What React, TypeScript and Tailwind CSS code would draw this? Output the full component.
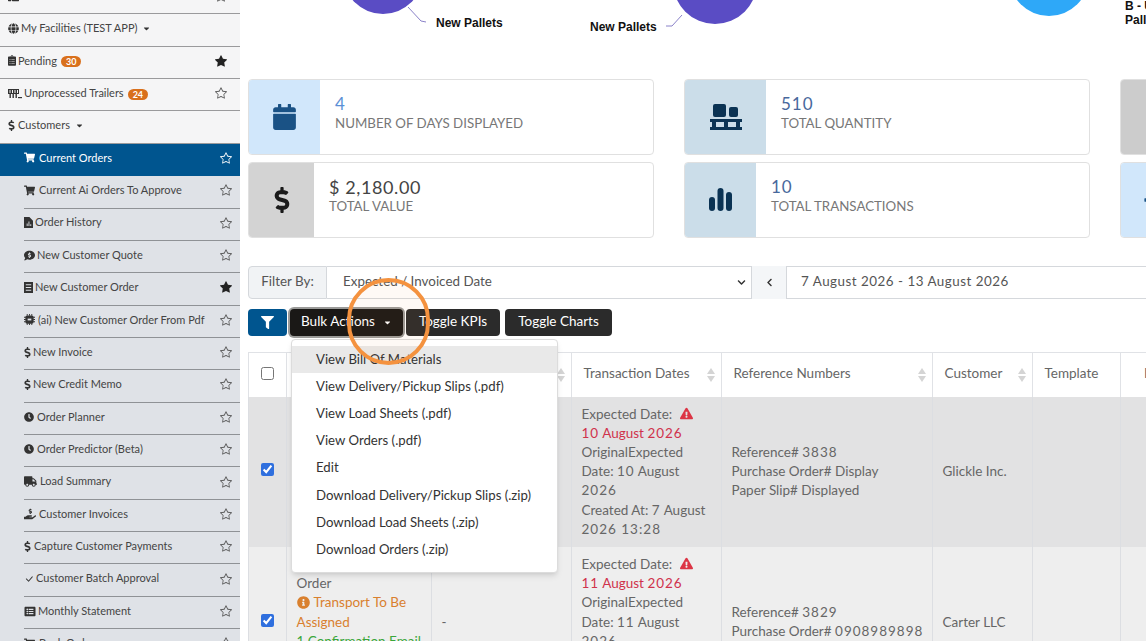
import React from "react";
import { FaGlobe, FaClipboardList, FaShoppingCart, FaCommentDollar, FaClock, FaTruck, FaHandHoldingUsd, FaDollarSign, FaListAlt, FaThList, FaCalendar, FaFilter, FaChevronLeft, FaChevronDown, FaExclamationTriangle, FaInfoCircle, FaCaretDown, FaLongArrowAltRight, FaFileInvoice } from "react-icons/fa";
import { BsStar, BsStarFill, BsCheckLg } from "react-icons/bs";

const font = "font-['Lato','Liberation_Sans',sans-serif]";

function Star({ on, light }: { on?: boolean; light?: boolean }) {
  return on ? <BsStarFill className={`w-[12px] h-[12px] ${light ? "text-white" : "text-[#222]"}`} /> : <BsStar className={`w-[12px] h-[12px] ${light ? "text-white" : "text-[#555]"}`} />;
}

function Badge({ n }: { n: string }) {
  return <span className="ml-1 rounded-full bg-[#d9701c] text-white text-[9px] font-bold px-[5px] leading-[11px] translate-y-[1px]">{n}</span>;
}

function TrailerIcon() {
  return (
    <svg viewBox="0 0 14 11" className="w-[14px] h-[11px] shrink-0" fill="#333">
      <path d="M0 1h11v5H0z M1.5 2v3h1V2z M4 2v3h1V2z M6.5 2v3h1V2z M9 2v3h1V2z" fillRule="evenodd" />
      <rect x="1.5" y="6" width="1.4" height="4" />
      <rect x="4.5" y="6" width="1.4" height="4" />
      <rect x="7.5" y="6" width="1.4" height="4" />
      <rect x="10" y="9" width="4" height="1.2" />
    </svg>
  );
}

function DocIcon() {
  return (
    <svg viewBox="0 0 10 12" className="w-[9px] h-[11px]" fill="#333">
      <path d="M0 0h6l4 4v8H0z M3 7v3h1V7z M5 5v5h1V5z M7 8v2h1V8z" fillRule="evenodd" />
    </svg>
  );
}

function ListDocIcon() {
  return (
    <svg viewBox="0 0 10 12" className="w-[9px] h-[11px]" fill="#333">
      <path d="M0 0h10v12H0z M2 2.5v1h6v-1z M2 5.5v1h6v-1z M2 8.5v1h6v-1z" fillRule="evenodd" />
    </svg>
  );
}

function AiIcon() {
  return (
    <svg viewBox="0 0 12 12" className="w-[11px] h-[11px]" fill="#333">
      <rect x="1.5" y="1.5" width="9" height="9" rx="2" />
      <path d="M3 0h1v2H3z M5.5 0h1v2h-1z M8 0h1v2H8z M3 10h1v2H3z M5.5 10h1v2h-1z M8 10h1v2H8z M0 3h2v1H0z M0 5.5h2v1H0z M0 8h2v1H0z M10 3h2v1h-2z M10 5.5h2v1h-2z M10 8h2v1h-2z" />
      <rect x="4" y="5" width="4" height="2" fill="#dfe2e7" />
    </svg>
  );
}

function TopRow({ icon, w, label, badge, star, caret }: { icon: React.ReactNode; w: string; label: string; badge?: string; star?: boolean; caret?: boolean }) {
  return (
    <div className="h-[32.37px] shrink-0 flex items-center pb-[3px] pl-2 pr-[13px] border-b border-[#9a9a9c] text-[11px] text-[#444]">
      <span className={`${w} shrink-0 flex items-center text-[#333]`}>{icon}</span>
      <span className="whitespace-nowrap">{label}</span>
      {badge && <Badge n={badge} />}
      {caret && <FaCaretDown className="ml-[5px] w-[9px] h-[9px] text-[#333]" />}
      {star !== undefined && <span className="ml-auto flex"><Star on={star} /></span>}
    </div>
  );
}

function SubRow({ icon, w, label, on, active }: { icon: React.ReactNode; w: string; label: string; on?: boolean; active?: boolean }) {
  return (
    <div className={`h-[32.37px] shrink-0 ${active ? "bg-[#00558f]" : "pl-6"}`}>
      <div className={`h-full flex items-center pb-[3px] pr-2 border-b ${active ? "pl-6 border-transparent text-white" : "border-[#8f9296] text-[#444]"} text-[11px]`}>
        <span className={`${w} shrink-0 flex items-center ${active ? "text-white" : "text-[#333]"}`}>{icon}</span>
        <span className="whitespace-nowrap">{label}</span>
        <span className="ml-auto flex"><Star on={on} light={active} /></span>
      </div>
    </div>
  );
}

const ic = "w-[11px] h-[11px]";
const dl = "w-[7px] h-[11px]";

function Sidebar() {
  return (
    <aside className="w-[240px] shrink-0 h-[641px] overflow-hidden flex flex-col bg-[#dfe2e7]">
      <div className="bg-[#f5f5f6] -mt-[18px]">
        <TopRow w="w-[14px]" icon={<FaThList className={ic} />} label="Pallet Trends" star={false} />
        <TopRow w="w-[13px]" icon={<FaGlobe className={ic} />} label="My Facilities (TEST APP)" caret />
        <TopRow w="w-[10px]" icon={<FaClipboardList className="w-[8px] h-[11px]" />} label="Pending" badge="30" star={true} />
        <TopRow w="w-[16px]" icon={<TrailerIcon />} label="Unprocessed Trailers" badge="24" star={false} />
        <TopRow w="w-[10px]" icon={<FaDollarSign className={dl} />} label="Customers" caret />
      </div>
      <SubRow active w="w-[15px]" icon={<FaShoppingCart className={ic} />} label="Current Orders" />
      <SubRow w="w-[15px]" icon={<FaShoppingCart className={ic} />} label="Current Ai Orders To Approve" />
      <SubRow w="w-[11px]" icon={<DocIcon />} label="Order History" />
      <SubRow w="w-[13px]" icon={<FaCommentDollar className={ic} />} label="New Customer Quote" />
      <SubRow on w="w-[11px]" icon={<ListDocIcon />} label="New Customer Order" />
      <SubRow w="w-[14px]" icon={<AiIcon />} label="(ai) New Customer Order From Pdf" />
      <SubRow w="w-[9px]" icon={<FaDollarSign className={dl} />} label="New Invoice" />
      <SubRow w="w-[9px]" icon={<FaDollarSign className={dl} />} label="New Credit Memo" />
      <SubRow w="w-[13px]" icon={<FaClock className="w-[10px] h-[10px]" />} label="Order Planner" />
      <SubRow w="w-[13px]" icon={<FaClock className="w-[10px] h-[10px]" />} label="Order Predictor (Beta)" />
      <SubRow w="w-[16px]" icon={<FaTruck className="w-[13px] h-[11px]" />} label="Load Summary" />
      <SubRow w="w-[15px]" icon={<FaHandHoldingUsd className="w-[12px] h-[12px]" />} label="Customer Invoices" />
      <SubRow w="w-[10px]" icon={<FaDollarSign className={dl} />} label="Capture Customer Payments" />
      <SubRow w="w-[12px]" icon={<BsCheckLg className="w-[10px] h-[10px]" />} label="Customer Batch Approval" />
      <SubRow w="w-[14px]" icon={<FaListAlt className="w-[12px] h-[11px]" />} label="Monthly Statement" />
      <SubRow w="w-[15px]" icon={<FaShoppingCart className={ic} />} label="Bank Orders" />
    </aside>
  );
}

function Charts() {
  return (
    <div className="h-[79px] shrink-0">
      <svg width="906" height="79" viewBox="240 0 906 79" className="block -ml-2 w-[906px]">
        <circle cx="383" cy="-26" r="40" fill="#5a4cc4" />
        <path d="M408 7 L421 21 L426 22" fill="none" stroke="#8a82c9" />
        <text x="436" y="27" fontSize="12" fontWeight="700" fill="#111" fontFamily="Liberation Sans">New Pallets</text>
        <circle cx="715" cy="-18" r="42" fill="#5a4cc4" />
        <path d="M682 15 L672 26 L666 26" fill="none" stroke="#8a82c9" />
        <text x="590" y="31" fontSize="12" fontWeight="700" fill="#111" fontFamily="Liberation Sans">New Pallets</text>
        <circle cx="1049" cy="-24" r="40" fill="#2ea8f8" />
        <text x="1125" y="10" fontSize="12" fontWeight="700" fill="#111" fontFamily="Liberation Sans">B - Used</text>
        <text x="1125" y="24" fontSize="12" fontWeight="700" fill="#111" fontFamily="Liberation Sans">Pallets</text>
      </svg>
    </div>
  );
}

function PalletIcon() {
  return (
    <svg viewBox="0 0 32 26" className="w-[32px] h-[26px]" fill="#0b3354">
      <rect x="3" y="0" width="13" height="13" rx="2" />
      <rect x="19" y="3" width="9" height="10" rx="2" />
      <rect x="0" y="15" width="32" height="3" />
      <rect x="0" y="23" width="32" height="3" />
      <rect x="2" y="18" width="4" height="5" />
      <rect x="14" y="18" width="4" height="5" />
      <rect x="26" y="18" width="4" height="5" />
    </svg>
  );
}

function BarsIcon() {
  return (
    <svg viewBox="0 0 23 23" className="w-[23px] h-[23px]" fill="#0b3354">
      <rect x="0" y="9" width="6" height="14" rx="3" />
      <rect x="8.5" y="0" width="6" height="23" rx="3" />
      <rect x="17" y="4" width="6" height="19" rx="3" />
    </svg>
  );
}

function Kpi({ w, bg, icon, value, label, vc, big }: { w: string; bg: string; icon: React.ReactNode; value: string; label: string; vc: string; big?: boolean }) {
  return (
    <div className="w-[406px] h-[75.5px] shrink-0 flex rounded border border-[#e0e0e0] bg-white overflow-hidden">
      <div className={`${w} ${bg} flex items-center justify-center shrink-0`}>{icon}</div>
      <div className="pl-[15px] pb-2 flex flex-col justify-center">
        <div className={`${vc} ${big ? "text-[18px] tracking-[0.6px]" : "text-[17px] tracking-[1px]"} leading-[20px]`}>{value}</div>
        <div className="text-[#777] text-[13.3px] leading-[18px]">{label}</div>
      </div>
    </div>
  );
}

function Kpis() {
  return (
    <div className="flex flex-col gap-[7.5px] shrink-0">
      <div className="flex gap-[30px]">
        <Kpi w="w-[71px]" bg="bg-[#d1e7fb]" icon={<FaCalendar className="w-[23px] h-[26px] text-[#1a5285]" />} value="4" label="NUMBER OF DAYS DISPLAYED" vc="text-[#5b8fd6]" />
        <Kpi w="w-[81px]" bg="bg-[#cbdde9]" icon={<PalletIcon />} value="510" label="TOTAL QUANTITY" vc="text-[#48689c]" />
        <Kpi w="w-[66px]" bg="bg-[#cccccc]" icon={<FaFileInvoice className="w-[17px] h-[22px] text-[#222]" />} value="" label="" vc="" />
      </div>
      <div className="flex gap-[30px]">
        <Kpi w="w-[65px]" bg="bg-[#d3d3d3]" icon={<FaDollarSign className="w-[24px] h-[26px] text-[#1a1a1a]" />} value="$ 2,180.00" label="TOTAL VALUE" vc="text-[#444]" big />
        <Kpi w="w-[71px]" bg="bg-[#cbdde9]" icon={<BarsIcon />} value="10" label="TOTAL TRANSACTIONS" vc="text-[#48689c]" />
        <Kpi w="w-[66px]" bg="bg-[#d1e7fb]" icon={<FaLongArrowAltRight className="w-[22px] h-[22px] text-[#1a5285]" />} value="" label="" vc="" />
      </div>
    </div>
  );
}

function FilterRow() {
  return (
    <div className="mt-[28.5px] h-[33px] shrink-0 flex text-[13.4px] text-[#555] w-[1000px]">
      <div className="w-[79px] pb-[2px] flex items-center justify-center bg-[#f1f3f5] border border-[#d5d8dc] rounded-l">Filter By:</div>
      <div className="w-[425px] pb-[2px] flex items-center justify-between pl-4 pr-[5px] border-y border-r border-[#d5d8dc]">
        <span>Expected / Invoiced Date</span>
        <FaChevronDown className="w-[9px] h-[9px] text-[#333] translate-y-[1px]" />
      </div>
      <div className="w-[34px] flex items-center justify-center bg-[#f4f6f8]"><FaChevronLeft className="w-[9px] h-[9px] text-[#333]" /></div>
      <div className="flex-1 pb-[2px] flex items-center pl-[14px] border border-[#d5d8dc] tracking-[0.5px]">7 August 2026 - 13 August 2026</div>
    </div>
  );
}

const menuItems = ["View Bill Of Materials", "View Delivery/Pickup Slips (.pdf)", "View Load Sheets (.pdf)", "View Orders (.pdf)", "Edit", "Download Delivery/Pickup Slips (.zip)", "Download Load Sheets (.zip)", "Download Orders (.zip)"];

function Buttons() {
  return (
    <div className="mt-[10px] h-[27px] shrink-0 flex text-white text-[13.5px] relative z-10">
      <button className="w-[39px] rounded bg-[#00558f] flex items-center justify-center"><FaFilter className="w-[13px] h-[13px]" /></button>
      <div className="relative ml-[3px]">
        <button className="w-[113px] h-[27px] pb-[2px] rounded bg-[#1a1816] ring-2 ring-[#9a9a98] flex items-center justify-center gap-2">Bulk Actions <FaCaretDown className="w-[9px] h-[9px] translate-y-[1px]" /></button>
        <div className="absolute left-[1px] top-[30px] w-[267px] h-[234px] bg-white rounded border border-[#dcdcdc] shadow-md pt-[6px] text-[#333] text-[13.2px]">
          {menuItems.map((m, i) => (
            <div key={m} className={`h-[27.2px] flex items-center pl-6 whitespace-nowrap ${i === 0 ? "bg-[#e9e9e9]" : ""}`}>{m}</div>
          ))}
        </div>
      </div>
      <button className="ml-[3px] w-[94px] pb-[2px] rounded bg-[#2b2b2b]">Toggle KPIs</button>
      <button className="ml-[5px] w-[107px] pb-[2px] rounded bg-[#2b2b2b]">Toggle Charts</button>
    </div>
  );
}

function Sort() {
  return (
    <span className="absolute right-[6px] top-1/2 -translate-y-1/2 flex flex-col gap-[2px]">
      <span className="w-0 h-0 border-x-[4px] border-x-transparent border-b-[6px] border-b-[#d4d4d4]" />
      <span className="w-0 h-0 border-x-[4px] border-x-transparent border-t-[6px] border-t-[#d4d4d4]" />
    </span>
  );
}

function Th({ children, sort, last }: { children?: React.ReactNode; sort?: boolean; last?: boolean }) {
  return (
    <th className={`relative h-[44px] ${last ? "pl-[23px]" : "pl-[11.5px]"} pr-3 pb-[3px] border-x border-t border-[#e0e2e6] font-normal text-left text-[#666] align-middle whitespace-nowrap overflow-hidden`}>
      {children}
      {sort && <Sort />}
    </th>
  );
}

const td = "px-[9.5px] py-2 border-x border-[#dcdee2] align-middle";

function Warn() {
  return <FaExclamationTriangle className="inline-block w-[13px] h-[13px] ml-1 text-[#dc3545] align-[-1px]" />;
}

function Num({ children }: { children: React.ReactNode }) {
  return <span className="tracking-[1px]">{children}</span>;
}

function Dates({ d }: { d: string }) {
  return (
    <>
      <div>Expected Date: <Warn /></div>
      <div className="text-[#d0324b]"><Num>{d}</Num> August <Num>2026</Num></div>
      <div>OriginalExpected<br />Date: <Num>{d}</Num> August<br /><Num>2026</Num></div>
      <div>Created At: <Num>7</Num> August<br /><Num>2026 13:28</Num></div>
    </>
  );
}

function Check({ on }: { on?: boolean }) {
  return <input type="checkbox" checked={!!on} readOnly className={`w-[13px] h-[13px] align-middle accent-[#2f6fde] ${on ? "-translate-y-[3px]" : "-translate-y-[2px]"}`} />;
}

function Table() {
  return (
    <div className="mt-4 shrink-0 w-[1000px]">
      <table className="table-fixed border-collapse w-[1000px] text-[13.5px] leading-[19.2px] text-[#666]">
        <colgroup>
          <col className="w-[38px]" />
          <col className="w-[145px]" />
          <col className="w-[140px]" />
          <col className="w-[150px]" />
          <col className="w-[211px]" />
          <col className="w-[100px]" />
          <col className="w-[88px]" />
          <col className="w-[128px]" />
        </colgroup>
        <thead>
          <tr>
            <th className="h-[44px] border-x border-t border-[#e0e2e6] align-middle text-center"><Check /></th>
            <Th sort>Order Status</Th>
            <Th sort>Order Number</Th>
            <Th sort>Transaction Dates</Th>
            <Th sort>Reference Numbers</Th>
            <Th sort>Customer</Th>
            <Th>Template</Th>
            <Th last>Invoice</Th>
          </tr>
        </thead>
        <tbody>
          <tr className="bg-[#e2e2e3] h-[150px]">
            <td className={`${td} text-center`}><Check on /></td>
            <td className={td}>Order</td>
            <td className={td}>-</td>
            <td className={td}><Dates d="10" /></td>
            <td className={td}>Reference# <Num>3838</Num><br />Purchase Order# Display<br />Paper Slip# Displayed</td>
            <td className={td}>Glickle Inc.</td>
            <td className={td}></td>
            <td className={td}></td>
          </tr>
          <tr className="bg-[#eeeeee] h-[150px]">
            <td className={`${td} text-center`}><Check on /></td>
            <td className={`${td} align-top`}>
              <div>Sales</div>
              <div>Order</div>
              <div className="text-[#d9802e]"><FaInfoCircle className="inline-block w-[13px] h-[13px] mr-1 align-[-2px]" />Transport To Be<br />Assigned</div>
              <div className="text-[#3aa63a] whitespace-nowrap">1 Confirmation Email</div>
            </td>
            <td className={td}>-</td>
            <td className={td}><Dates d="11" /></td>
            <td className={td}>Reference# <Num>3829</Num><br /><span className="whitespace-nowrap">Purchase Order# <Num>0908989898</Num></span></td>
            <td className={td}>Carter LLC</td>
            <td className={td}></td>
            <td className={td}></td>
          </tr>
        </tbody>
      </table>
    </div>
  );
}

export default function App() {
  return (
    <div className={`relative w-[1146px] h-[641px] overflow-hidden bg-white flex ${font}`}>
      <Sidebar />
      <main className="flex-1 min-w-0 pl-2 flex flex-col overflow-hidden">
        <Charts />
        <Kpis />
        <FilterRow />
        <Buttons />
        <Table />
      </main>
      <div className="absolute left-[347px] top-[278px] w-[83px] h-[87px] rounded-full border-[4px] border-[#f4923f] bg-[#f4923f]/5 z-20" />
    </div>
  );
}
